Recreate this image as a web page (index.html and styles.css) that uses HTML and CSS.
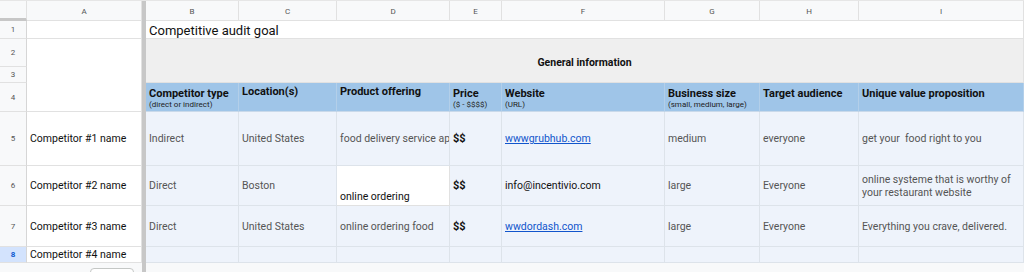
FILE: index.html
```html
<!DOCTYPE html>
<html lang="en">
<head>
    <meta charset="UTF-8">
    <meta name="viewport" content="width=device-width, initial-scale=1.0">
    <title>Competitive audit</title>
    <link rel="stylesheet" href="styles.css">
</head>
<body>
    <div class="sheet">
        <!-- column letters -->
        <div class="corner"></div>
        <div class="ch">A</div>
        <div class="freeze"></div>
        <div class="ch">B</div>
        <div class="ch">C</div>
        <div class="ch">D</div>
        <div class="ch">E</div>
        <div class="ch">F</div>
        <div class="ch">G</div>
        <div class="ch">H</div>
        <div class="ch">I</div>

        <!-- row 1 -->
        <div class="rh">1</div>
        <div class="cell"></div>
        <div class="cell title span-b-i">Competitive audit goal</div>

        <!-- rows 2-3 -->
        <div class="rh">2</div>
        <div class="cell merged-a"></div>
        <div class="cell general">General information</div>
        <div class="rh">3</div>

        <!-- row 4 -->
        <div class="rh">4</div>
        <div class="cell hd"><b>Competitor type</b><small>(direct or indirect)</small></div>
        <div class="cell hd single"><b>Location(s)</b></div>
        <div class="cell hd single"><b>Product offering</b></div>
        <div class="cell hd"><b>Price</b><small>($ - $$$$)</small></div>
        <div class="cell hd"><b>Website</b><small>(URL)</small></div>
        <div class="cell hd"><b>Business size</b><small>(small, medium, large)</small></div>
        <div class="cell hd"><b>Target audience</b></div>
        <div class="cell hd"><b>Unique value proposition</b></div>

        <!-- row 5 -->
        <div class="rh">5</div>
        <div class="cell name">Competitor #1 name</div>
        <div class="cell dt">Indirect</div>
        <div class="cell dt">United States</div>
        <div class="cell dt">food delivery service app</div>
        <div class="cell dt price">$$</div>
        <div class="cell dt"><a href="#">wwwgrubhub.com</a></div>
        <div class="cell dt">medium</div>
        <div class="cell dt">everyone</div>
        <div class="cell dt">get your&nbsp; food right to you</div>

        <!-- row 6 -->
        <div class="rh">6</div>
        <div class="cell name">Competitor #2 name</div>
        <div class="cell dt">Direct</div>
        <div class="cell dt">Boston</div>
        <div class="cell plain bottom">online ordering</div>
        <div class="cell dt price">$$</div>
        <div class="cell dt dark">info@incentivio.com</div>
        <div class="cell dt">large</div>
        <div class="cell dt">Everyone</div>
        <div class="cell dt wrap">online systeme that is worthy of your restaurant website</div>

        <!-- row 7 -->
        <div class="rh">7</div>
        <div class="cell name">Competitor #3 name</div>
        <div class="cell dt">Direct</div>
        <div class="cell dt">United States</div>
        <div class="cell dt">online ordering food</div>
        <div class="cell dt price">$$</div>
        <div class="cell dt"><a href="#">wwdordash.com</a></div>
        <div class="cell dt">large</div>
        <div class="cell dt">Everyone</div>
        <div class="cell dt">Everything you crave, delivered.</div>

        <!-- row 8 -->
        <div class="rh selected">8</div>
        <div class="cell name">Competitor #4 name</div>
        <div class="cell dt"></div>
        <div class="cell dt"></div>
        <div class="cell dt"></div>
        <div class="cell dt"></div>
        <div class="cell dt"></div>
        <div class="cell dt"></div>
        <div class="cell dt"></div>
        <div class="cell dt"></div>

        <!-- below the grid -->
        <div class="footer-left"><span class="add-btn"></span></div>
        <div class="footer-right"></div>
    </div>
</body>
</html>
```

FILE: styles.css
```css
* {
    margin: 0;
    padding: 0;
    box-sizing: border-box;
}

body {
    background-color: #fff;
    font-family: 'Roboto', 'Liberation Sans', Arial, sans-serif;
    overflow: hidden;
}

.sheet {
    display: grid;
    grid-template-columns: 27px 115px 4px 93px 98px 113px 52px 163px 95px 99px 165px;
    grid-template-rows: 20px 18px 28px 16px 29px 54px 40px 41px 16px 10px;
    width: 1024px;
    height: 272px;
    border-top: 1px solid #e6e6e6;
}

.sheet > div {
    border-right: 1px solid #e1e1e1;
    border-bottom: 1px solid #e1e1e1;
    overflow: hidden;
    white-space: nowrap;
}

.corner {
    background-color: #f8f9fa;
    border-bottom: 3px solid #c7c7c7 !important;
}

.ch {
    background-color: #f8f9fa;
    color: #555;
    font-size: 8px;
    display: flex;
    align-items: center;
    justify-content: center;
    padding-top: 1px;
}

.freeze {
    grid-column: 3;
    grid-row: 1 / -1;
    background-color: #c7c7c7;
    border: none !important;
}

.rh {
    grid-column: 1;
    background-color: #f8f9fa;
    color: #555;
    font-size: 8px;
    display: flex;
    align-items: center;
    justify-content: center;
    border-right-color: #d6d6d6 !important;
}

.rh.selected {
    background-color: #d3e3fd;
    color: #0b57d0;
    font-weight: bold;
}

.cell {
    padding: 0 3px;
    font-size: 10.5px;
    color: #222;
    display: flex;
    align-items: center;
    background-color: #fff;
}

.title {
    font-size: 13px;
    color: #111;
    padding-top: 1px;
}

.span-b-i {
    grid-column: 4 / 12;
}

.merged-a {
    grid-column: 2;
    grid-row: 3 / 6;
}

.general {
    grid-column: 4 / 12;
    grid-row: 3 / 5;
    background-color: #efefef;
    justify-content: center;
    font-weight: bold;
    font-size: 10.5px;
    color: #111;
    padding-top: 3px;
}

.hd {
    background-color: #9fc5e8;
    flex-direction: column;
    align-items: flex-start;
    justify-content: flex-start;
    padding-top: 5px;
    border-right-color: #b3cfe9 !important;
    border-bottom-color: #c9d9ea !important;
}

.hd.single {
    padding-top: 3px;
}

.hd b {
    font-size: 11px;
    color: #111;
    line-height: 12px;
}

.hd small {
    font-size: 8px;
    color: #222;
    line-height: 9px;
}

.name {
    color: #111;
    padding-left: 3px;
}

.dt {
    background-color: #eef3fb;
    color: #555;
    border-right-color: #dde3ea !important;
    border-bottom-color: #dde3ea !important;
}

.dt.dark {
    color: #111;
}

.price {
    color: #111;
    font-weight: bold;
    font-size: 11px;
}

.dt a {
    color: #1155cc;
    text-decoration: underline;
}

.plain {
    color: #111;
}

.bottom {
    align-items: flex-end;
    padding-bottom: 2px;
}

.wrap {
    white-space: normal !important;
    line-height: 13px;
}

.footer-left {
    grid-column: 1 / 3;
    background-color: #f8f9fa;
    border: none !important;
    padding-left: 90px;
    padding-top: 5px;
}

.add-btn {
    display: block;
    width: 44px;
    height: 12px;
    border: 1px solid #c4c7c5;
    border-radius: 4px;
    background-color: #fff;
}

.footer-right {
    grid-column: 4 / 12;
    background-color: #f8f9fa;
    border: none !important;
}
```
